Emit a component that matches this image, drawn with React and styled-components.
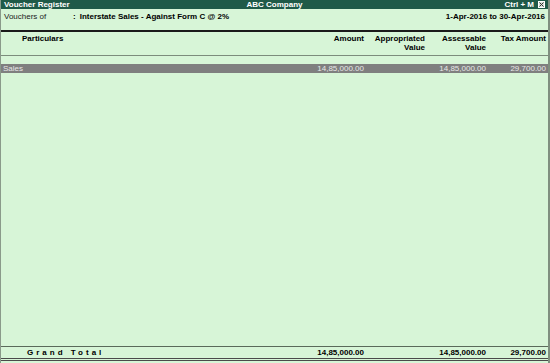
import React from "react";
import styled, { createGlobalStyle } from "styled-components";

const Global = createGlobalStyle`
  html, body { margin: 0; padding: 0; }
  body { background: #d7f5d7; font-family: "Liberation Sans", Arial, sans-serif; }
  #root { width: 550px; height: 363px; }
`;

const Screen = styled.div`
  width: 550px;
  height: 363px;
  display: flex;
  flex-direction: column;
  background: #d7f5d7;
  color: #000;
  font-size: 8px;
  box-sizing: border-box;
  border-left: 1px solid #8a9a8a;
  border-right: 2px solid #7f8f7f;
`;

const TitleBar = styled.div`
  height: 9px;
  background: #1f5a48;
  color: #fff;
  font-weight: bold;
  display: grid;
  grid-template-columns: 1fr auto 1fr;
  align-items: center;
  padding: 0 3px;
  line-height: 9px;
`;

const TitleRight = styled.div`
  display: flex;
  justify-content: flex-end;
  align-items: center;
  gap: 4px;
`;

const CloseBox = styled.span`
  width: 7px;
  height: 7px;
  background: #d8e0d8;
  border: 1px solid #fff;
  box-sizing: border-box;
  display: inline-flex;
  align-items: center;
  justify-content: center;
`;

const InfoRow = styled.div`
  display: flex;
  align-items: center;
  padding: 1px 3px 0 3px;
  height: 12px;
`;

const InfoLabel = styled.span`
  width: 69px;
  color: #222;
`;

const Colon = styled.span`
  margin-right: 4px;
`;

const InfoValue = styled.span`
  font-weight: bold;
  flex: 1;
`;

const Period = styled.span`
  font-weight: bold;
`;

const HeaderRule = styled.div`
  margin-top: 8px;
  height: 2px;
  background: #1a1a1a;
`;

const ColGrid = styled.div`
  display: grid;
  grid-template-columns: 1fr 60px 61px 61px 60px;
  padding-right: 2px;
`;

const HeaderRow = styled(ColGrid)`
  font-weight: bold;
  height: 21px;
  padding-top: 2px;
  line-height: 9px;
  border-bottom: 1px solid #7c8c7c;
`;

const HeadCell = styled.div`
  text-align: ${(p) => (p.$left ? "left" : "right")};
  padding-left: ${(p) => (p.$left ? "21px" : "0")};
`;

const Body = styled.div`
  flex: 1;
  padding-top: 8px;
`;

const DataRow = styled(ColGrid)`
  background: #7f7f7f;
  color: #e8e8e8;
  height: 9px;
  line-height: 9px;
`;

const Cell = styled.div`
  text-align: ${(p) => (p.$left ? "left" : "right")};
  padding-left: ${(p) => (p.$left ? "2px" : "0")};
  white-space: nowrap;
`;

const TotalRow = styled(ColGrid)`
  border-top: 1px solid #5a6a5a;
  border-bottom: 3px double #4a4a4a;
  font-weight: bold;
  height: 11px;
  line-height: 11px;
  margin-bottom: 2px;
`;

const GrandLabel = styled.div`
  padding-left: 26px;
  letter-spacing: 3px;
`;

const cols = [
  { a: "Amount" },
  { a: "Appropriated", b: "Value" },
  { a: "Assessable", b: "Value" },
  { a: "Tax Amount" },
];

export default function App() {
  return (
    <>
      <Global />
      <Screen>
        <TitleBar>
          <span>Voucher Register</span>
          <span>ABC Company</span>
          <TitleRight>
            <span>Ctrl + M</span>
            <CloseBox>
              <svg width="5" height="5" viewBox="0 0 5 5">
                <path d="M0.5 0.5 L4.5 4.5 M4.5 0.5 L0.5 4.5" stroke="#333" strokeWidth="1" />
              </svg>
            </CloseBox>
          </TitleRight>
        </TitleBar>
        <InfoRow>
          <InfoLabel>Vouchers of</InfoLabel>
          <InfoValue>
            <Colon>:</Colon>Interstate Sales - Against Form C @ 2%
          </InfoValue>
          <Period>1-Apr-2016 to 30-Apr-2016</Period>
        </InfoRow>
        <HeaderRule />
        <HeaderRow>
          <HeadCell $left>Particulars</HeadCell>
          {cols.map((c) => (
            <HeadCell key={c.a}>
              {c.a}
              {c.b && <br />}
              {c.b}
            </HeadCell>
          ))}
        </HeaderRow>
        <Body>
          <DataRow>
            <Cell $left>Sales</Cell>
            <Cell>14,85,000.00</Cell>
            <Cell></Cell>
            <Cell>14,85,000.00</Cell>
            <Cell>29,700.00</Cell>
          </DataRow>
        </Body>
        <TotalRow>
          <GrandLabel>Grand Total</GrandLabel>
          <Cell>14,85,000.00</Cell>
          <Cell></Cell>
          <Cell>14,85,000.00</Cell>
          <Cell>29,700.00</Cell>
        </TotalRow>
      </Screen>
    </>
  );
}
